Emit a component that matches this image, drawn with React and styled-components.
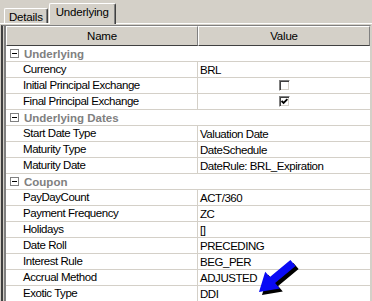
import styled, { createGlobalStyle } from 'styled-components';

const Global = createGlobalStyle`
  html, body {
    margin: 0;
    padding: 0;
    background: #d4d0c8;
  }
`;

const Window = styled.div`
  position: relative;
  width: 372px;
  height: 301px;
  overflow: hidden;
  background: #d4d0c8;
  font-family: "Liberation Sans", Arial, sans-serif;
  font-size: 11.5px;
  color: #000;
  display: flex;
  flex-direction: column;
`;

const TabStrip = styled.div`
  height: 23px;
  display: flex;
  align-items: flex-end;
  padding-left: 4px;
  box-sizing: border-box;
`;

const Tab = styled.div`
  position: relative;
  z-index: ${(p) => (p.active ? 2 : 1)};
  box-sizing: border-box;
  height: ${(p) => (p.active ? '21px' : '15px')};
  margin-left: ${(p) => (p.active ? '1px' : '0')};
  margin-bottom: ${(p) => (p.active ? '-1px' : '0')};
  padding: ${(p) => (p.active ? '2px 6px 0' : '1px 4px 0')};
  background: #d4d0c8;
  border-top: 1px solid #fff;
  border-left: 1px solid #fff;
  border-right: 1px solid #404040;
  box-shadow: inset -1px 0 #808080;
  border-radius: 2px 2px 0 0;
  display: flex;
  align-items: ${(p) => (p.active ? 'flex-start' : 'center')};
  white-space: nowrap;
  letter-spacing: -0.2px;
`;

const Page = styled.div`
  flex: 1;
  border-top: 1px solid #fff;
  padding: 1px 1px 0 1px;
  display: flex;
  flex-direction: column;
  min-height: 0;
`;

const GridFrame = styled.div`
  flex: 1;
  border-left: 2px solid #404040;
  border-top: 1px solid #808080;
  border-right: 1px solid #d4d0c8;
  padding-left: 1px;
  display: flex;
  flex-direction: column;
  min-height: 0;
`;

const GridInner = styled.div`
  flex: 1;
  border-left: 2px solid #808080;
  background: #fff;
  overflow: hidden;
`;

const HeaderRow = styled.div`
  display: grid;
  grid-template-columns: 192px 1fr;
  height: 20px;
`;

const HeaderCell = styled.div`
  box-sizing: border-box;
  background: #d4d0c8;
  border-top: 1px solid #fff;
  border-left: 1px solid #fff;
  border-right: 1px solid #808080;
  border-bottom: 1px solid #404040;
  display: flex;
  align-items: center;
  justify-content: center;
  letter-spacing: -0.2px;
`;

const Row = styled.div`
  display: grid;
  grid-template-columns: 192px 1fr;
  height: 16px;
  box-sizing: border-box;
  border-bottom: 1px solid #d4d0c8;
  letter-spacing: -0.45px;
`;

const NameCell = styled.div`
  border-right: 1px solid #d4d0c8;
  padding-left: 17px;
  line-height: 15px;
  white-space: nowrap;
`;

const ValueCell = styled.div`
  display: flex;
  align-items: center;
  justify-content: ${(p) => (p.center ? 'center' : 'flex-start')};
  padding-left: ${(p) => (p.center ? '0' : '2px')};
  white-space: nowrap;
`;

const CategoryRow = styled.div`
  height: 16px;
  box-sizing: border-box;
  border-bottom: 1px solid #d4d0c8;
  display: flex;
  align-items: center;
  padding-left: 4px;
  gap: 5px;
  font-weight: bold;
  color: #808080;
`;

const Collapse = styled.span`
  position: relative;
  width: 9px;
  height: 9px;
  box-sizing: border-box;
  border: 1px solid #808080;
  background: #fff;

  &::after {
    content: '';
    position: absolute;
    left: 1px;
    top: 3px;
    width: 5px;
    height: 1px;
    background: #000;
  }
`;

const CheckBox = styled.span`
  width: 11px;
  height: 11px;
  box-sizing: border-box;
  border-top: 1px solid #808080;
  border-left: 1px solid #808080;
  border-right: 1px solid #fff;
  border-bottom: 1px solid #fff;
  box-shadow: inset 1px 1px #404040, inset -1px -1px #d4d0c8;
  background: #fff;
  display: flex;
  align-items: center;
  justify-content: center;
`;

const Arrow = styled.svg`
  position: absolute;
  left: 250px;
  top: 255px;
  width: 50px;
  height: 46px;
  pointer-events: none;
`;

const rows = [
  { cat: 'Underlying' },
  { name: 'Currency', value: 'BRL' },
  { name: 'Initial Principal Exchange', check: false },
  { name: 'Final Principal Exchange', check: true },
  { cat: 'Underlying Dates' },
  { name: 'Start Date Type', value: 'Valuation Date' },
  { name: 'Maturity Type', value: 'DateSchedule' },
  { name: 'Maturity Date', value: 'DateRule: BRL_Expiration' },
  { cat: 'Coupon' },
  { name: 'PayDayCount', value: 'ACT/360' },
  { name: 'Payment Frequency', value: 'ZC' },
  { name: 'Holidays', value: '[]' },
  { name: 'Date Roll', value: 'PRECEDING' },
  { name: 'Interest Rule', value: 'BEG_PER' },
  { name: 'Accrual Method', value: 'ADJUSTED' },
  { name: 'Exotic Type', value: 'DDI' },
];

const arrowPts = '259,292 265.2,271.8 269.9,277.1 290.4,260 295.6,266 275.1,283.1 279.8,288.4';

function App() {
  return (
    <Window>
      <Global />
      <TabStrip>
        <Tab>Details</Tab>
        <Tab active>Underlying</Tab>
      </TabStrip>
      <Page>
        <GridFrame>
          <GridInner>
            <HeaderRow>
              <HeaderCell>Name</HeaderCell>
              <HeaderCell>Value</HeaderCell>
            </HeaderRow>
            {rows.map((r, i) =>
              r.cat ? (
                <CategoryRow key={i}>
                  <Collapse />
                  {r.cat}
                </CategoryRow>
              ) : (
                <Row key={i}>
                  <NameCell>{r.name}</NameCell>
                  {r.check !== undefined ? (
                    <ValueCell center>
                      <CheckBox>
                        {r.check && (
                          <svg width="7" height="7" viewBox="0 0 7 7">
                            <polyline points="0.6,3 2.6,5 6.4,1.2" fill="none" stroke="#000" strokeWidth="1.8" />
                          </svg>
                        )}
                      </CheckBox>
                    </ValueCell>
                  ) : (
                    <ValueCell>{r.value}</ValueCell>
                  )}
                </Row>
              )
            )}
          </GridInner>
        </GridFrame>
      </Page>
      <Arrow viewBox="250 255 50 46">
        <polygon points={arrowPts} fill="#000" transform="translate(3 3)" />
        <polygon points={arrowPts} fill="#0a0af5" />
      </Arrow>
    </Window>
  );
}

export default App;
